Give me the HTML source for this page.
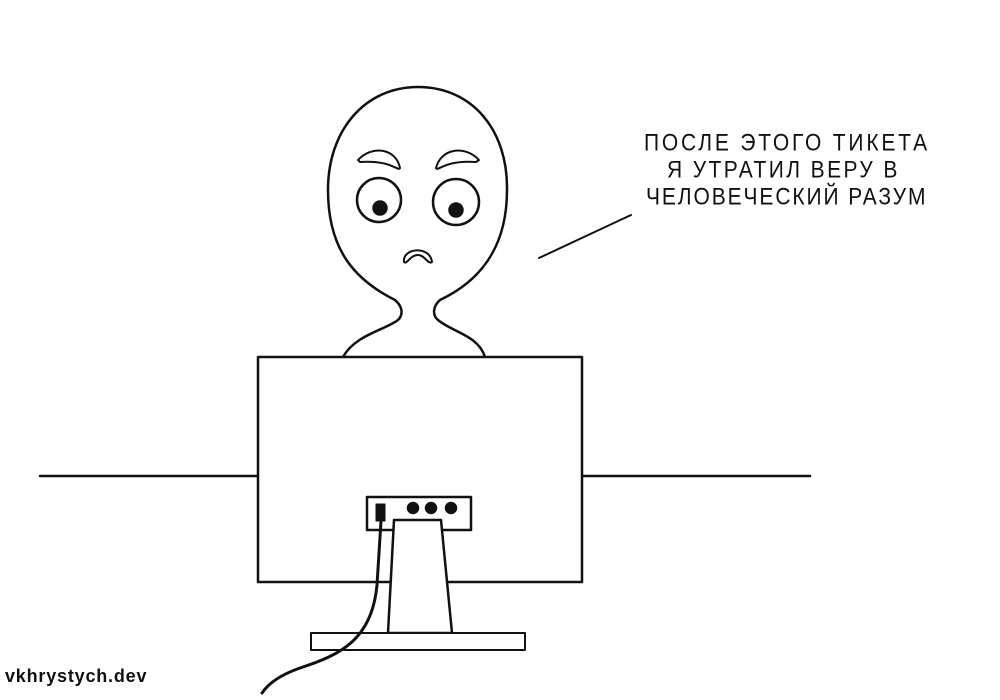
<!DOCTYPE html>
<html><head><meta charset="utf-8"><style>
html,body{margin:0;padding:0;background:#fff;width:1000px;height:700px;overflow:hidden}
.t{position:absolute;font-family:"Liberation Sans","DejaVu Sans",sans-serif;font-size:21px;color:#111;letter-spacing:2.8px;white-space:nowrap;transform:scaleY(1.15);transform-origin:left top}
.w{position:absolute;left:5px;top:666px;font-family:"Liberation Sans",sans-serif;font-weight:bold;font-size:18px;letter-spacing:0.8px;color:#111}
</style></head><body>
<svg width="1000" height="700" style="position:absolute;left:0;top:0" fill="none" stroke="#111" stroke-width="2.5" stroke-linecap="round" stroke-linejoin="round">
<path d="M343 357 C355 335 385 330 398 320 C404 314 402 306 395 300 C355 280 328 250 328 190 C328 130 365 87 418 87 C472 87 508 130 507 190 C507 250 478 282 440 300 C433 306 432 315 438 320 C452 332 478 335 485 357"/>
<path d="M358 160 C372 145 396 148 400 168 C398 172 393 160 360 162 Z" stroke-width="2"/>
<path d="M479 160 C465 145 441 148 436 168 C438 172 443 160 476 162 Z" stroke-width="2"/>
<circle cx="379" cy="200" r="22"/><circle cx="456" cy="202" r="23"/>
<circle cx="380" cy="208" r="6.5" fill="#111"/><circle cx="456" cy="210" r="6.5" fill="#111"/>
<path d="M404 262 C402 248 430 245 432 262 C428 265 425 255 418 255 C410 255 407 265 404 262 Z" stroke-width="2"/>
<path d="M539 258 L631 215" stroke-width="2"/>
<path d="M40 476 L258 476 M582 476 L810 476"/>
<rect x="258" y="357" width="324" height="225" fill="#fff"/>
<rect x="367" y="497" width="104" height="33" fill="#fff"/>
<path d="M394 520 L441 520 L452 633 L388 633 Z" fill="#fff"/>
<rect x="311" y="633" width="214" height="17" fill="#fff" stroke-width="2"/>
<rect x="376" y="504" width="9" height="17" fill="#111" stroke-width="1"/>
<circle cx="413" cy="508" r="5" fill="#111"/><circle cx="431" cy="508" r="5" fill="#111"/><circle cx="451" cy="508" r="5" fill="#111"/>
<path d="M381 521 L377 585 C372 640 340 655 300 668 C280 675 268 684 262 693" stroke-width="3"/>
</svg>
<div class="t" style="left:644px;top:130px">ПОСЛЕ ЭТОГО ТИКЕТА</div>
<div class="t" style="left:667px;top:157px;letter-spacing:2.4px">Я УТРАТИЛ ВЕРУ В</div>
<div class="t" style="left:646px;top:184px;letter-spacing:1.9px">ЧЕЛОВЕЧЕСКИЙ РАЗУМ</div>
<div class="w">vkhrystych.dev</div>
</body></html>
